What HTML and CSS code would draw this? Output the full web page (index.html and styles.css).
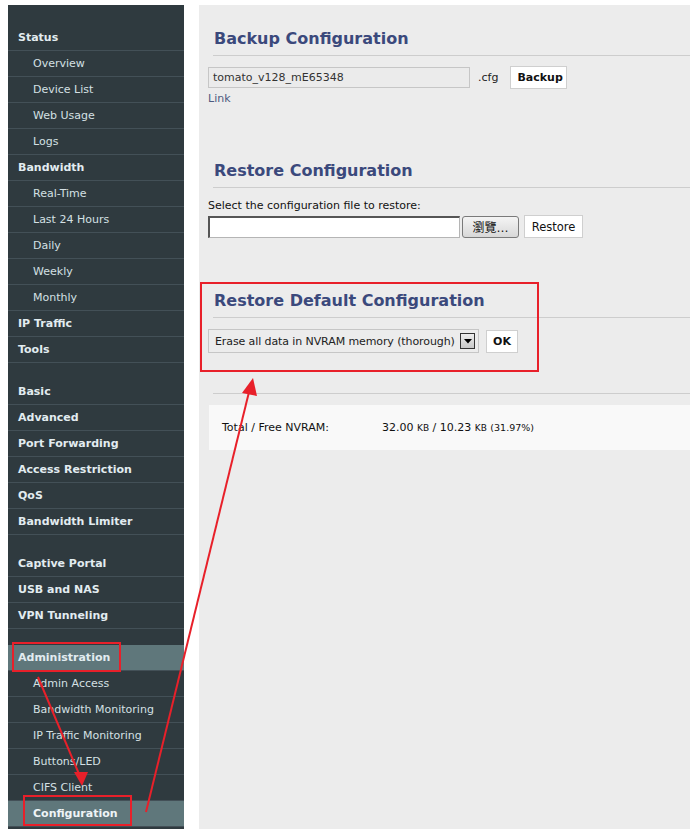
FILE: index.html
```html
<!DOCTYPE html>
<html>
<head>
<meta charset="utf-8">
<title>Configuration</title>
<link rel="stylesheet" href="styles.css">
</head>
<body>
<div class="page">
  <nav class="sidebar">
    <div class="item head">Status</div>
    <div class="item sub">Overview</div>
    <div class="item sub">Device List</div>
    <div class="item sub">Web Usage</div>
    <div class="item sub">Logs</div>
    <div class="item head">Bandwidth</div>
    <div class="item sub">Real-Time</div>
    <div class="item sub">Last 24 Hours</div>
    <div class="item sub">Daily</div>
    <div class="item sub">Weekly</div>
    <div class="item sub">Monthly</div>
    <div class="item head">IP Traffic</div>
    <div class="item head">Tools</div>
    <div class="spacer"></div>
    <div class="item head">Basic</div>
    <div class="item head">Advanced</div>
    <div class="item head">Port Forwarding</div>
    <div class="item head">Access Restriction</div>
    <div class="item head">QoS</div>
    <div class="item head">Bandwidth Limiter</div>
    <div class="spacer"></div>
    <div class="item head">Captive Portal</div>
    <div class="item head">USB and NAS</div>
    <div class="item head">VPN Tunneling</div>
    <div class="spacer"></div>
    <div class="item head active">Administration</div>
    <div class="item sub">Admin Access</div>
    <div class="item sub">Bandwidth Monitoring</div>
    <div class="item sub">IP Traffic Monitoring</div>
    <div class="item sub">Buttons/LED</div>
    <div class="item sub">CIFS Client</div>
    <div class="item sub active bold">Configuration</div>
  </nav>
  <main class="main">
    <section class="section first">
      <h2 class="heading">Backup Configuration</h2>
      <div class="row backup-row">
        <div class="textbox grey">tomato_v128_mE65348</div>
        <span class="ext">.cfg</span>
        <button class="btn bold-btn">Backup</button>
      </div>
      <div class="link">Link</div>
    </section>
    <section class="section second">
      <h2 class="heading">Restore Configuration</h2>
      <div class="label">Select the configuration file to restore:</div>
      <div class="row file-row">
        <div class="filebox"></div>
        <button class="browse">瀏覽…</button>
        <button class="btn plain-btn">Restore</button>
      </div>
    </section>
    <section class="section third">
      <h2 class="heading">Restore Default Configuration</h2>
      <div class="row default-row">
        <div class="selectbox">
          <span class="select-text">Erase all data in NVRAM memory (thorough)</span>
          <span class="select-arrow"><svg width="8" height="5" viewBox="0 0 8 5"><polygon points="0,0 8,0 4,4.5" fill="#000"/></svg></span>
        </div>
        <button class="btn bold-btn ok">OK</button>
      </div>
    </section>
    <div class="divider"></div>
    <div class="panel">
      <span class="panel-label">Total / Free NVRAM:</span>
      <span class="panel-value">32.00 <span class="unit">KB</span> / 10.23 <span class="unit">KB</span> <span class="pct">(31.97%)</span></span>
    </div>
  </main>
</div>
<svg class="annot" width="690" height="829" viewBox="0 0 690 829">
  <g fill="none" stroke="#e8202a" stroke-width="2">
    <rect x="13" y="643" width="107" height="28"/>
    <rect x="24" y="796" width="107" height="29"/>
    <rect x="201" y="283" width="337" height="88"/>
    <line x1="38" y1="677" x2="79" y2="774"/>
    <line x1="146" y1="812" x2="249" y2="392"/>
  </g>
  <g fill="#e8202a">
    <polygon points="82,786 74,772 88,772"/>
    <polygon points="253,378 242,393 257,396"/>
  </g>
</svg>
</body>
</html>
```
FILE: styles.css
```css
html, body {
  margin: 0;
  padding: 0;
  background: #ffffff;
  height: 100%;
  overflow: hidden;
}

body {
  font-family: "DejaVu Sans", Verdana, sans-serif;
  font-size: 11px;
  color: #1a1a1a;
  position: relative;
}

.page {
  display: flex;
  gap: 15px;
  padding: 5px 0 0 8px;
  height: 829px;
  box-sizing: border-box;
}

.sidebar {
  width: 176px;
  flex: none;
  background: #2f3a3f;
  padding-top: 20px;
  box-sizing: border-box;
}

.item {
  height: 25px;
  line-height: 25px;
  border-bottom: 1px solid #435057;
  white-space: nowrap;
}

.head {
  font-weight: bold;
  color: #e2ecf0;
  padding-left: 10px;
}

.sub {
  color: #d4e0e4;
  padding-left: 25px;
}

.sub.bold {
  font-weight: bold;
  color: #eef4f6;
}

.active {
  background: #5f777b;
}

.spacer {
  height: 16px;
}

.main {
  flex: 1;
  background: #ececec;
  padding: 24px 0 0 9px;
  box-sizing: border-box;
}

.heading {
  margin: 0 0 0 5px;
  padding: 0 0 6px 1px;
  font-size: 16px;
  line-height: 20px;
  font-weight: bold;
  color: #3b497c;
  border-bottom: 1px solid #cdcdcd;
}

.row {
  display: flex;
  align-items: center;
}

.backup-row {
  margin-top: 10px;
  height: 23px;
}

.textbox {
  width: 262px;
  height: 21px;
  box-sizing: border-box;
  border: 1px solid #c6c6c6;
  background: #ebebeb;
  color: #333;
  padding-left: 4px;
  line-height: 19px;
}

.ext {
  margin-left: 8px;
  color: #222;
}

.btn {
  font-family: "DejaVu Sans", Verdana, sans-serif;
  font-size: 11px;
  background: #ffffff;
  border: 1px solid #cfcfcf;
  color: #111;
  padding: 0 6px;
  height: 23px;
  margin: 0;
  box-sizing: border-box;
}

.bold-btn {
  font-weight: bold;
}

.backup-row .btn {
  margin-left: 12px;
  width: 57px;
}

.link {
  margin-top: 3px;
  line-height: 14px;
  color: #4c5a80;
}

.second {
  margin-top: 55px;
}

.label {
  margin-top: 11px;
  line-height: 14px;
  color: #111;
}

.file-row {
  margin-top: 2px;
}

.filebox {
  width: 252px;
  height: 22px;
  box-sizing: border-box;
  background: #fff;
  border: 1px solid #b5b5b5;
  border-top: 2px solid #555;
  border-left: 2px solid #555;
}

.browse {
  margin-left: 2px;
  width: 57px;
  height: 22px;
  box-sizing: border-box;
  border: 1px solid #7a7a7a;
  border-radius: 3px;
  background: linear-gradient(#f4f4f4, #d8d8d8);
  font-family: "DejaVu Sans", "Noto Sans CJK TC", sans-serif;
  font-size: 12px;
  color: #111;
  padding: 0;
}

.plain-btn {
  margin-left: 5px;
  width: 59px;
  height: 23px;
  font-size: 11.5px;
}

.third {
  margin-top: 53px;
}

.default-row {
  margin-top: 11px;
}

.selectbox {
  display: flex;
  align-items: center;
  width: 271px;
  height: 24px;
  box-sizing: border-box;
  border: 1px solid #c6c6c6;
  background: #ececec;
  padding-left: 6px;
  color: #222;
}

.select-text {
  flex: 1;
  white-space: nowrap;
  letter-spacing: -0.1px;
}

.select-arrow {
  width: 15px;
  height: 16px;
  box-sizing: border-box;
  margin-right: 3px;
  border: 1px solid #333;
  background: linear-gradient(#eeeeee, #c8c8c8);
  display: flex;
  align-items: center;
  justify-content: center;
}

.ok {
  margin-left: 7px;
  width: 32px;
  height: 23px;
  padding: 0;
}

.divider {
  margin: 40px 0 0 5px;
  border-top: 1px solid #cdcdcd;
}

.panel {
  margin: 11px 0 0 1px;
  height: 45px;
  background: #f9f9f9;
  display: flex;
  align-items: center;
  padding-left: 13px;
  color: #111;
}

.panel-label {
  width: 160px;
}

.unit {
  font-size: 9px;
}

.pct {
  font-size: 9.5px;
}

.annot {
  position: absolute;
  top: 0;
  left: 0;
  pointer-events: none;
}
```
